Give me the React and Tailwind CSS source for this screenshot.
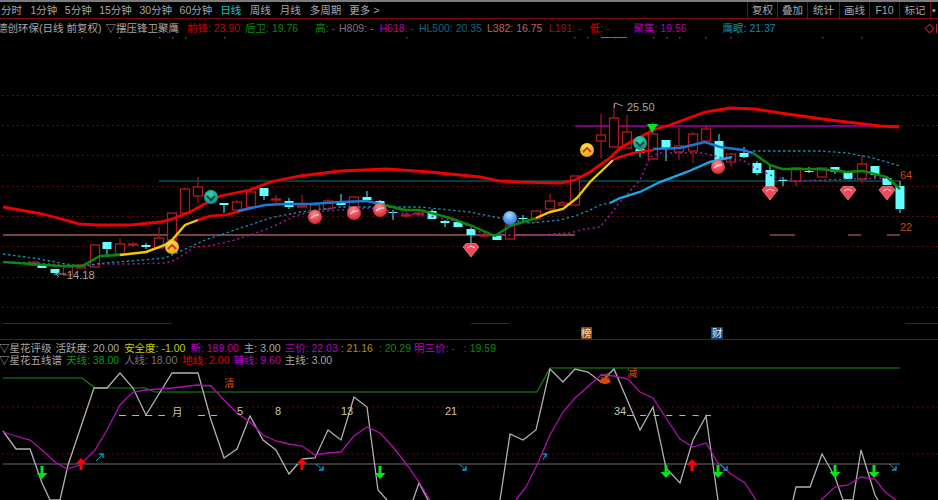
import React from "react";

const CJK = { fontFamily: '"Liberation Sans","Noto Sans CJK SC",sans-serif' };
const poly = (p) => p.map((q) => q.join(",")).join(" ");

// x, boxTop, boxBottom, wickTop, wickBottom, kind (r = hollow red, c = filled cyan)
const candles = [
  [33, 262, 265, 262, 265, "r"], [42, 264, 268, 264, 268, "c"], [55, 269, 273, 269, 275, "c"], [68, 267, 275, 267, 275, "r"],
  [81, 265, 268, 265, 268, "r"], [95, 245, 267, 245, 267, "r"], [107, 242, 249, 242, 255, "c"], [120, 244, 254, 238, 254, "r"],
  [133, 244, 244.5, 242, 247, "r"], [146, 245, 247, 243, 249, "c"], [159, 238, 248, 227, 248, "r"], [172, 213, 240, 213, 240, "r"],
  [185, 189, 213, 187, 213, "r"], [198, 187, 196, 177, 203, "r"], [211, 192, 198, 190, 200, "c"], [224, 203, 205, 203, 213, "c"],
  [237, 202, 210, 200, 210, "r"], [251, 192, 207, 187, 207, "r"], [264, 188, 196, 188, 200, "c"], [276, 199, 199.5, 195, 203, "r"],
  [289, 201, 207, 198, 209, "c"], [302, 206, 207, 195, 207, "r"], [315, 205, 211, 205, 211, "r"], [328, 201, 209, 199, 209, "r"],
  [341, 201, 205, 194, 205, "c"], [354, 197, 207, 197, 207, "r"], [367, 197, 200, 191, 200, "c"], [380, 201, 205, 200, 205, "c"],
  [393, 212, 212.5, 210, 220, "c"], [406, 215, 215.5, 212, 218, "r"], [419, 213, 213.5, 211, 216, "r"], [432, 211, 219, 209, 219, "c"],
  [445, 221, 223, 220, 227, "c"], [458, 222, 227, 221, 227, "c"], [471, 229, 235, 228, 243, "c"], [484, 235, 235.5, 233, 237, "r"],
  [497, 236, 240, 235, 240, "c"], [510, 225, 239, 222, 239, "r"], [523, 218, 218.5, 215, 222, "c"], [536, 211, 219, 211, 223, "r"],
  [550, 201, 209, 194, 209, "r"], [563, 203, 205, 201, 206, "r"], [575, 176, 205, 176, 205, "r"], [601, 135, 141, 114, 158, "r"],
  [614, 118, 147, 103, 147, "r"], [627, 132, 148, 115, 148, "r"], [640, 149, 153, 145, 157, "c"], [653, 134, 159, 122, 159, "r"],
  [666, 140, 149, 140, 161, "c"], [679, 146, 152, 128, 160, "r"], [693, 134, 151, 132, 163, "r"], [706, 129, 141, 126, 141, "r"],
  [719, 141, 160, 134, 160, "c"], [731, 154, 162, 154, 167, "r"], [744, 153, 157, 147, 158, "c"], [757, 163, 173, 161, 175, "c"],
  [770, 170, 186, 165, 186, "c"], [783, 180, 180.5, 177, 186, "c"], [796, 168, 181, 168, 186, "r"], [809, 171, 171.5, 167, 173, "c"],
  [822, 168, 177, 168, 177, "r"], [835, 167, 172, 167, 174, "c"], [848, 173, 179, 172, 179, "c"], [862, 164, 179, 155, 183, "r"],
  [875, 166, 175, 166, 178, "c"], [887, 178, 185, 176, 185, "c"], [900, 186, 209, 181, 213, "c"],
];

const Candles = () =>
  candles.map(([x, t, b, wt, wb, k], i) => {
    const col = k === "r" ? "#b01c1c" : "#66ffff";
    const w = 4.5;
    return (
      <g key={i}>
        <line x1={x} x2={x} y1={wt} y2={wb} stroke={k === "r" ? "#a81c1c" : "#44d0d0"} strokeWidth="1.2" />
        <rect x={x - w} y={t} width={w * 2} height={Math.max(b - t, 1)} fill={k === "r" ? "#000" : col} stroke={b - t < 2 ? col : k === "r" ? col : "none"} strokeWidth={k === "r" ? 1.3 : 0} />
      </g>
    );
  });

const Ball = ({ x, y, c1, c2, id }) => (
  <g>
    <defs>
      <radialGradient id={id} cx="45%" cy="30%" r="75%">
        <stop offset="0" stopColor={c1} />
        <stop offset="1" stopColor={c2} />
      </radialGradient>
    </defs>
    <circle cx={x} cy={y} r={7} fill={`url(#${id})`} />
  </g>
);

const Chev = ({ x, y, up, id }) => (
  <g>
    <Ball x={x} y={y} id={id} c1={up ? "#ffe84a" : "#2fd8b0"} c2={up ? "#e89a1c" : "#0d8a7c"} />
    <polyline points={up ? poly([[x - 4, y + 2], [x, y - 2], [x + 4, y + 2]]) : poly([[x - 4, y - 1], [x, y + 3], [x + 4, y - 1]])} fill="none" stroke={up ? "#d83a1a" : "#0b4a48"} strokeWidth="2" />
  </g>
);

const RedBall = ({ x, y, id }) => (
  <g>
    <Ball x={x} y={y} id={id} c1="#ff8a8a" c2="#d01c2c" />
    <path d={`M${x - 4} ${y + 1} Q${x} ${y - 3} ${x + 4} ${y - 2}`} fill="none" stroke="#ffd8d8" strokeWidth="1.2" />
  </g>
);

const Gem = ({ x, y }) => (
  <g>
    <polygon points={poly([[x - 8, y - 3], [x - 5, y - 6.5], [x + 5, y - 6.5], [x + 8, y - 3], [x, y + 7]])} fill="#f24a5c" stroke="#ff9aa0" strokeWidth="0.6" />
    <polyline points={poly([[x - 4, y - 2], [x, y - 4], [x + 4, y - 2]])} fill="none" stroke="#ffe0e0" strokeWidth="1" />
  </g>
);

const Down = ({ x, y }) => (
  <polygon points={poly([[x - 1.5, y - 9], [x + 1.5, y - 9], [x + 1.5, y - 2], [x + 5.5, y - 2], [x, y + 4], [x - 5.5, y - 2], [x - 1.5, y - 2]])} fill="#00e61c" />
);
const Up = ({ x, y }) => (
  <polygon points={poly([[x, y - 6], [x + 5.5, y], [x + 1.5, y], [x + 1.5, y + 6], [x - 1.5, y + 6], [x - 1.5, y], [x - 5.5, y]])} fill="#ff0000" />
);
const Arrow = ({ x1, y1, x2, y2, hx, hy }) => (
  <g stroke="#1596c8" fill="none">
    <line x1={x1} y1={y1} x2={x2} y2={y2} />
    <polyline points={poly([[x2 + hx, y2], [x2, y2], [x2, y2 + hy]])} strokeWidth="1.4" />
  </g>
);

const T = ({ x, y, c = "#b0b0a0", s = 11, a, children }) => (
  <text x={x} y={y} fill={c} fontSize={s} textAnchor={a} style={CJK}>
    {children}
  </text>
);

const topDots = [81, 119, 159, 172, 185, 224, 406, 574, 587, 601, 614, 653, 666, 679, 705, 730, 822, 861];

const MainChart = () => {
  const grid = [95, 125, 155, 186, 216, 246, 277, 307];
  return (
    <svg className="block h-[302px] w-[938px]" viewBox="0 37 938 302">
      {topDots.map((x) => (
        <rect key={x} x={x} y="37" width="1.5" height="1.5" fill="#c000c0" />
      ))}
      <line x1="601" x2="627" y1="37.5" y2="37.5" stroke="#707070" />
      {grid.map((y) => (
        <line key={y} x1="2" x2="938" y1={y + 0.5} y2={y + 0.5} stroke="#800c0c" strokeDasharray="1.5 3.5" />
      ))}
      <line x1="2" x2="172" y1="323.5" y2="323.5" stroke="#7c0c0c" />
      <line x1="471" x2="510" y1="323.5" y2="323.5" stroke="#7c0c0c" />
      <line x1="905" x2="938" y1="323.5" y2="323.5" stroke="#7c0c0c" />
      <line x1="3" x2="575" y1="235" y2="235" stroke="#9c5c5c" strokeWidth="1.3" />
      {[[770, 795], [848, 861], [887, 900]].map(([a, b]) => (
        <line key={a} x1={a} x2={b} y1="235" y2="235" stroke="#9c5c5c" strokeWidth="1.3" />
      ))}
      <line x1="159" x2="900" y1="181" y2="181" stroke="#055050" strokeWidth="1.4" />
      <line x1="575" x2="900" y1="126" y2="126" stroke="#a000a0" strokeWidth="1.4" />
      <Candles />
      <polyline fill="none" stroke="#a818a8" strokeWidth="1.5" strokeDasharray="2 3" points={poly([[3, 262], [40, 263], [80, 267], [100, 264], [130, 264], [165, 263], [175, 260], [195, 247], [210, 246], [235, 240], [250, 235], [270, 228], [295, 216], [310, 212], [340, 210], [370, 208], [400, 213], [430, 216], [460, 222], [480, 232], [495, 235], [540, 235], [570, 233], [585, 229], [600, 227], [610, 215], [620, 202], [640, 180], [650, 157], [660, 153], [703, 153], [730, 160], [743, 160], [753, 167], [777, 178], [793, 181], [887, 178], [900, 189]])} />
      <polyline fill="none" stroke="#1092b8" strokeWidth="1.3" strokeDasharray="2.5 2.5" points={poly([[3, 254], [40, 259], [60, 263], [80, 266], [105, 263], [130, 261], [165, 258], [190, 247], [205, 240], [235, 230], [270, 218], [300, 212], [340, 207], [370, 207], [420, 207], [470, 212], [500, 218], [530, 223], [560, 220], [575, 216], [590, 210], [600, 205], [610, 203]])} />
      <polyline fill="none" stroke="#1092b8" strokeWidth="1.3" strokeDasharray="2.5 2.5" points={poly([[753, 151], [820, 151], [847, 153], [873, 158], [900, 166]])} />
      <polyline fill="none" stroke="#f00000" strokeWidth="2.8" points={poly([[3, 207], [43, 214], [80, 224], [96, 225], [130, 225], [160, 222], [172, 219], [190, 212], [210, 201], [220, 196], [250, 190], [270, 182], [300, 176], [340, 171], [387, 169], [430, 172], [480, 177], [500, 181], [520, 182], [560, 183], [575, 180], [590, 172], [610, 158], [620, 148], [653, 130], [670, 125], [705, 112], [730, 108], [755, 109], [780, 113], [830, 120], [880, 126], [899, 127]])} />
      <polyline fill="none" stroke="#18a8e8" strokeWidth="2.4" points={poly([[610, 203], [620, 198], [640, 192], [660, 182], [687, 172], [710, 162], [732, 157]])} />
      <polyline fill="none" stroke="#0a8a0a" strokeWidth="2.4" points={poly([[3, 262], [60, 266], [82, 266], [100, 256], [120, 255]])} />
      <polyline fill="none" stroke="#f4c800" strokeWidth="2.4" points={poly([[120, 255], [146, 252], [165, 245], [172, 240], [185, 225], [198, 220]])} />
      <polyline fill="none" stroke="#f00000" strokeWidth="2.4" points={poly([[198, 220], [210, 216], [225, 215], [237, 212], [250, 208]])} />
      <polyline fill="none" stroke="#1a78d8" strokeWidth="2.4" points={poly([[238, 211], [265, 205], [285, 204], [310, 204], [341, 202], [367, 201], [385, 205]])} />
      <polyline fill="none" stroke="#0a8a0a" strokeWidth="2.4" points={poly([[385, 205], [400, 209], [406, 210], [420, 210], [450, 218], [470, 225], [495, 236], [510, 226], [520, 223], [536, 218]])} />
      <polyline fill="none" stroke="#f4c800" strokeWidth="2.4" points={poly([[536, 218], [550, 212], [563, 209], [577, 198], [590, 182], [613, 160]])} />
      <polyline fill="none" stroke="#f00000" strokeWidth="2.4" points={poly([[613, 160], [620, 157], [633, 153], [653, 150]])} />
      <polyline fill="none" stroke="#1a78d8" strokeWidth="2.4" points={poly([[653, 149], [680, 148], [705, 142], [720, 147], [743, 150], [753, 153]])} />
      <polyline fill="none" stroke="#0a8a0a" strokeWidth="2.4" points={poly([[753, 153], [770, 165], [782, 169], [820, 169], [847, 172], [863, 171], [887, 177], [900, 189]])} />
      <Chev x={172} y={247} up id="g1" />
      <Chev x={587} y={150} up id="g2" />
      <Chev x={211} y={197} id="g3" />
      <Chev x={640} y={143} id="g4" />
      {[[315, 217], [354, 213], [380, 210], [718, 167]].map(([x, y], i) => (
        <RedBall key={x} x={x} y={y} id={`r${i}`} />
      ))}
      <Ball x={510} y={218} id="b1" c1="#a8dcff" c2="#1868e0" />
      {[[471, 250], [770, 193], [848, 193], [887, 193]].map(([x, y]) => (
        <Gem key={x} x={x} y={y} />
      ))}
      <polygon points={poly([[647, 124], [658, 124], [652, 133]])} fill="#00e61c" />
      <polyline points={poly([[614, 108], [615, 103], [623, 106]])} fill="none" stroke="#a0a0a0" />
      <T x={627} y={111} c="#a8a8a8">25.50</T>
      <line x1="56" x2="66" y1="274" y2="274" stroke="#a0a0a0" />
      <polyline points={poly([[59, 277], [56, 274], [59, 272]])} fill="none" stroke="#a0a0a0" />
      <T x={67} y={279} c="#a8a8a8">14.18</T>
      <T x={900} y={179} c="#c84810">64</T>
      <T x={900} y={231} c="#c84810">22</T>
      <rect x="581" y="327" width="11" height="12" fill="#8b4a14" />
      <T x={581} y={337} c="#f0e0d0" s={10.5}>榜</T>
      <rect x="711" y="327" width="12" height="12" fill="#154a7c" />
      <T x={712} y={337} c="#e0f0ff" s={10.5}>财</T>
    </svg>
  );
};

const LowerChart = () => (
  <svg className="block h-[134px] w-[938px]" viewBox="0 366 938 134">
    {[407, 454].map((y) => (
      <line key={y} x1="2" x2="938" y1={y} y2={y} stroke="#800c0c" strokeDasharray="1.5 3.5" />
    ))}
    <line x1="3" x2="900" y1="464" y2="464" stroke="#6c6c6c" strokeWidth="1.2" />
    <polyline fill="none" stroke="#188818" strokeWidth="1.2" points={poly([[3, 378], [82, 378], [95, 388], [145, 388], [155, 392], [537, 392], [550, 368], [900, 368]])} />
    <polyline fill="none" stroke="#b0b0b0" strokeWidth="1.3" points={poly([[3, 431], [16, 449], [30, 449], [42, 483], [50, 500], [60, 500], [68, 465], [94, 388], [107, 388], [120, 373], [133, 388], [146, 415], [172, 373], [198, 373], [211, 420], [224, 458], [237, 449], [250, 416], [263, 440], [276, 450], [289, 474], [302, 459], [315, 458], [328, 430], [341, 440], [354, 397], [367, 407], [378, 490], [387, 500]])} />
    <polyline fill="none" stroke="#b0b0b0" strokeWidth="1.3" points={poly([[413, 500], [419, 483], [428, 500]])} />
    <polyline fill="none" stroke="#b0b0b0" strokeWidth="1.3" points={poly([[500, 500], [510, 434], [523, 440], [536, 430], [550, 369], [563, 382], [575, 369], [588, 372], [601, 382], [614, 369], [640, 430], [653, 407], [666, 468], [680, 483], [693, 440], [706, 416], [718, 500]])} />
    <polyline fill="none" stroke="#b0b0b0" strokeWidth="1.3" points={poly([[793, 500], [796, 487], [810, 487], [822, 454], [835, 477], [843, 500], [853, 500], [861, 450], [875, 495], [878, 500]])} />
    <polyline fill="none" stroke="#b010b0" strokeWidth="1.3" points={poly([[3, 432], [16, 436], [30, 440], [42, 450], [55, 462], [67, 469], [80, 465], [95, 450], [107, 430], [120, 405], [133, 392], [146, 390], [172, 388], [198, 385], [211, 386], [224, 400], [237, 413], [250, 422], [263, 435], [276, 441], [289, 444], [302, 446], [315, 455], [328, 453], [341, 452], [354, 436], [367, 427], [380, 433], [394, 448], [407, 465], [419, 482], [430, 500]])} />
    <polyline fill="none" stroke="#b010b0" strokeWidth="1.3" points={poly([[516, 500], [526, 487], [538, 463], [550, 435], [563, 412], [575, 398], [601, 375], [614, 376], [628, 379], [640, 392], [653, 398], [666, 418], [680, 439], [693, 447], [706, 443], [718, 463], [731, 474], [745, 483], [756, 500]])} />
    <polyline fill="none" stroke="#b010b0" strokeWidth="1.3" points={poly([[821, 500], [835, 487], [848, 485], [861, 477], [875, 479], [885, 492], [896, 500]])} />
    <line x1="119" x2="165" y1="415.5" y2="415.5" stroke="#b8b8a8" strokeDasharray="7 6.1" />
    <line x1="198" x2="217" y1="415.5" y2="415.5" stroke="#b8b8a8" strokeDasharray="7 6.1" />
    <line x1="627" x2="711" y1="415.5" y2="415.5" stroke="#b8b8a8" strokeDasharray="6 7.1" />
    {[[42, 475], [380, 475], [666, 474], [718, 474], [835, 474], [874, 474]].map(([x, y]) => (
      <Down key={x} x={x} y={y} />
    ))}
    {[[81, 464], [302, 464], [692, 465]].map(([x, y]) => (
      <Up key={x} x={x} y={y} />
    ))}
    <Arrow x1={96} y1={461} x2={103} y2={454} hx={-4} hy={4} />
    <Arrow x1={543} y1={460} x2={546} y2={454} hx={-3} hy={3} />
    <Arrow x1={316} y1={464} x2={323} y2={470} hx={-4} hy={-4} />
    <Arrow x1={459} y1={464} x2={466} y2={470} hx={-4} hy={-4} />
    <Arrow x1={720} y1={464} x2={727} y2={470} hx={-4} hy={-4} />
    <Arrow x1={889} y1={464} x2={896} y2={470} hx={-4} hy={-4} />
    <T x={224} y={387} c="#d8480c" s={10.5}>清</T>
    <T x={172} y={416} c="#c8c8b8" s={10.5}>月</T>
    <T x={237} y={415} c="#c8c8b8">5</T>
    <T x={275} y={415} c="#c8c8b8">8</T>
    <T x={341} y={415} c="#c8c8b8">13</T>
    <T x={445} y={415} c="#c8c8b8">21</T>
    <T x={614} y={415} c="#c8c8b8">34</T>
    <T x={627} y={377} c="#d8480c" s={10.5}>减</T>
    <ellipse cx="605" cy="381" rx="5.5" ry="3" fill="#d8480c" />
    <T x={600} y={382} c="#d8480c" s={10.5}>逃</T>
  </svg>
);

const tabs = [
  ["分时", "text-[#a8a8a8]"], ["1分钟", "ml-[8.5px] text-[#a8a8a8]"], ["5分钟", "ml-[7.5px] text-[#a8a8a8]"], ["15分钟", "ml-[7.5px] text-[#a8a8a8]"],
  ["30分钟", "ml-[7.5px] text-[#a8a8a8]"], ["60分钟", "ml-[7.5px] text-[#a8a8a8]"], ["日线", "ml-[8px] text-[#18c8c8]"], ["周线", "ml-[8.5px] text-[#a8a8a8]"],
  ["月线", "ml-[9px] text-[#a8a8a8]"], ["多周期", "ml-[9px] text-[#a8a8a8]"], ["更多 >", "ml-[8px] text-[#a8a8a8]"],
];
const tools = [["复权", "w-[30px]"], ["叠加", "w-[30px]"], ["统计", "w-[32px]"], ["画线", "w-[30px]"], ["F10", "w-[30px]"], ["标记", "w-[31px]"]];

const S = ({ c, children, className = "" }) => (
  <span className={`whitespace-pre ${className}`} style={{ color: c }}>{children}</span>
);

export default function App() {
  return (
    <div className="relative h-[500px] w-[938px] overflow-hidden bg-black text-[10.5px] leading-[14px]" style={CJK}>
      <div className="h-[2px] bg-[#7c7c7c]" />
      <div className="flex h-[17px] items-center justify-between border-b border-[#7c0c0c]">
        <div className="flex items-center pl-[1px]">
          {tabs.map(([t, cls]) => (
            <span key={t} className={`whitespace-pre ${cls}`}>{t}</span>
          ))}
        </div>
        <div className="flex h-full items-center text-[#a8a8a8]">
          {tools.map(([t, w]) => (
            <span key={t} className={`flex h-full items-center justify-center border-l border-[#7c0c0c] ${w}`}>{t}</span>
          ))}
          <span className="flex h-full w-[8px] items-center overflow-hidden border-l border-[#7c0c0c] pl-[1px]">•</span>
        </div>
      </div>
      <div className="flex h-[18px] items-center justify-between">
        <div className="-ml-[3px] flex items-center">
          <S c="#a8a8a8">德创环保(日线 前复权)</S>
          <S c="#a8a8a8" className="ml-[4px]">▽摆压锋卫聚鹰</S>
          <S c="#c80000" className="ml-[8px]">前锋: 23.90</S>
          <S c="#0a8a0a" className="ml-[5px]">后卫: 19.76</S>
          <S c="#0a8a0a" className="ml-[17px]">高: -</S>
          <S c="#787878" className="ml-[4px]">H809: -</S>
          <S c="#b800b8" className="ml-[6px]">H618: -</S>
          <S c="#0a6a7a" className="ml-[5px]">HL500: 20.35</S>
          <S c="#c06060" className="ml-[5px]">L382: 16.75</S>
          <S c="#901818" className="ml-[6.5px]">L191: -</S>
          <S c="#d80000" className="ml-[8px]">低: -</S>
          <S c="#b000b0" className="ml-[24px]">聚集: 19.56</S>
          <S c="#0a8ab8" className="ml-[36px]">鹰眼: 21.37</S>
        </div>
        <span className="mr-[-1px] flex items-center gap-[3px]">
          <span className="h-[7px] w-[7px] rotate-45 border border-[#c02020]" />
          <span className="h-[9px] w-[3px] border-l border-[#c02020]" />
        </span>
      </div>
      <MainChart />
      <div className="h-[2px] border-t border-[#7c0c0c]" />
      <div className="h-[25px] leading-[12px]">
        <div className="-ml-[1px] flex h-[13px] items-center">
          <S c="#a8a8a8">▽星花评级</S>
          <S c="#a8a8a8" className="ml-[4px]">活跃度: 20.00</S>
          <S c="#c8c800" className="ml-[5px]">安全度: -1.00</S>
          <S c="#b800b8" className="ml-[5px]">新: 189.00</S>
          <S c="#a8a8a8" className="ml-[5px]">主: 3.00</S>
          <S c="#b800b8" className="ml-[4px]">三价: 22.03</S>
          <S c="#b09000" className="ml-[3px]">: 21.16</S>
          <S c="#0a8a0a" className="ml-[6px]">: 20.29</S>
          <S c="#b800b8" className="ml-[3px]">明三价: -</S>
          <S c="#0a8a0a" className="ml-[9px]">: 19.59</S>
        </div>
        <div className="-ml-[1px] flex h-[12px] items-center">
          <S c="#a8a8a8">▽星花五线谱</S>
          <S c="#0a9a0a" className="ml-[4px]">天线: 38.00</S>
          <S c="#787878" className="ml-[5px]">人线: 18.00</S>
          <S c="#e00000" className="ml-[5px]">地线: 2.00</S>
          <S c="#b800b8" className="ml-[4px]">辅线: 9.60</S>
          <S c="#a8a8a8" className="ml-[4px]">主线: 3.00</S>
        </div>
      </div>
      <LowerChart />
    </div>
  );
}
